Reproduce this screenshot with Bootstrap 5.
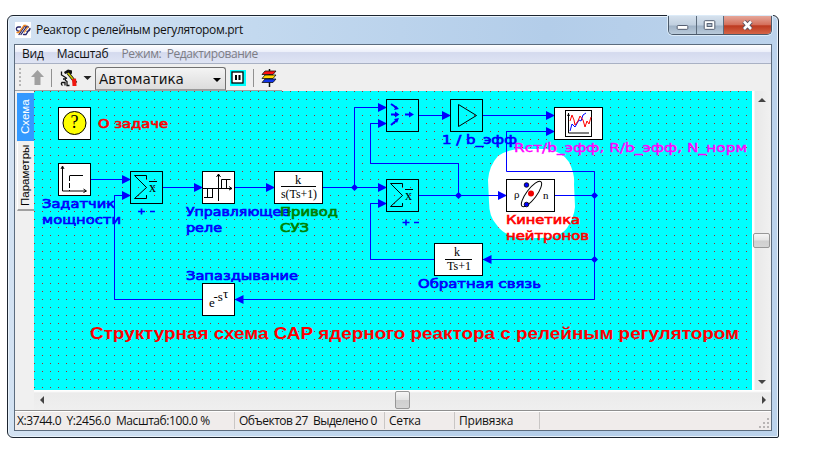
<!DOCTYPE html>
<html lang="ru">
<head>
<meta charset="utf-8">
<title>Реактор с релейным регулятором.prt</title>
<link href="https://cdn.jsdelivr.net/npm/bootstrap@5.3.0/dist/css/bootstrap.min.css" rel="stylesheet">
<style>
body{background:#fff;font:12px/16px "Open Sans","Noto Sans",sans-serif;color:#111;padding:15px 0 0 7px;overflow:hidden}
.win{width:772px;height:423px;border:1px solid #1c2530;border-radius:6px 6px 2px 6px;background:linear-gradient(90deg,#d3e2f2 0,#c3d9ef 32%,#b3cde9 70%,#bcd3ec 100%);box-shadow:inset 0 0 0 1px #e9f3fc;padding:0 6px 6px}
.titlebar{height:28px;padding-left:1px}
.caption{letter-spacing:-.32px;padding:6px 0 0 5px}
.winbtns{height:19px;width:104px;flex:none;border:1px solid #4b5a6b;border-top:0;border-radius:0 0 5px 5px;overflow:hidden;box-shadow:0 0 0 1px #dcebf8}
.wb{background:linear-gradient(#d5e1ed 0,#c0cfdf 48%,#9fb2c6 52%,#bccddd 100%);border-right:1px solid #5c6b7c;width:28px;flex:none}
.wb.mx{width:27px}
.wb.cl{background:linear-gradient(#e5a79a 0,#d5705c 45%,#bd3a20 52%,#d86a4c 100%);border:0;width:47px}
.client{width:758px;height:387px;border:1px solid #5c6c7e;background:#f0f0f0}
.menus{height:19px;border-bottom:1px solid #a9b1c4;background:linear-gradient(#fff 0,#eceffa 38%,#d4daee 42%,#dfe4f4 100%);padding-left:7px}
.menus span{letter-spacing:-.22px;margin-right:13px}
.menus .off{color:#7d7d85;letter-spacing:-.42px}
.toolrow{height:27px;background:#efefef}
.tools{height:27px;border-bottom:1px solid #a0a0a0;width:267px}
.combo{width:131px;height:23px;margin-top:3px;background:linear-gradient(#f4f4f4,#dcdcdc);border:1px solid #707070;border-bottom-color:#999;border-radius:3px 3px 0 0;font:13.5px/23px "DejaVu Sans",sans-serif;padding:0 4px 0 3px;color:#111}
.work{height:339px}
.sidetabs{width:19px;padding:2px 0 0 2px;background:#f0f0f0}
.vtab{writing-mode:vertical-rl;transform:rotate(180deg);font:12px/15px "Liberation Sans",sans-serif;text-align:center;width:17px;background:#f0f0f0;border:1px solid #999;border-left:0;color:#000}
.vtab.on{background:#3399ff;color:#fff;height:48px;font-size:11.5px;border-color:#3399ff #3399ff #3399ff #8ac2ff}
.vtab.two{height:69px;font-size:11.5px;border:0;border-top:2px solid #a0a0a0;border-right:1px solid #fff;margin-top:1px}
.sheet{width:718px;height:299px;display:block}
.vs{width:19px;height:299px;background:linear-gradient(90deg,#fff 0 2px,#e8e8e8 3px,#f1f1f1 100%)}
.hs{height:20px;margin-left:19px;background:linear-gradient(#fff 0 1px,#ebebeb 3px,#efefef 100%)}
.thumb{background:linear-gradient(#f5f5f5 0,#e4e4e4 48%,#cfcfcf 52%,#d5d5d5 100%);border:1px solid #979797;border-radius:2px}
.thumb.v{width:17px;height:15px}.thumb.h{width:15px;height:18px}
.status{height:20px;border-top:1px solid #8f8f8f;background:#f0eceb;box-shadow:inset 0 1px 0 #fff}
.pane{height:17px;border-right:1px solid #c9c6c5;white-space:pre;line-height:17px;padding-left:4px;letter-spacing:-.2px}
.p1{width:220px;padding-left:2px;letter-spacing:-.42px}.p2{width:150px;letter-spacing:-.5px}.p3{width:70px}.p4{width:85px}
text{white-space:pre}
.lbl{font-family:"DejaVu Sans",sans-serif;font-size:12.5px;stroke-width:.65px}
</style>
<script src="https://cdn.jsdelivr.net/npm/bootstrap@5.3.0/dist/js/bootstrap.bundle.min.js"></script>
</head>
<body>
<div class="win">
  <div class="titlebar d-flex">
    <svg class="mt-1" width="16" height="20" viewBox="0 0 16 20"><path d="M0 2h16v16H0z" fill="#fff"/><g fill="none" stroke-width="1.300" stroke-linecap="round"><path d="M5.500 7H3Q1 7.500 1.500 9.500T4 11M4 14.500 10 5.500M13.500 7h-3M6 14.500 12 6M15 8.500q0 2.500-3 3M8.500 14.500h2.500l3.500-5.500" stroke="#27276b"/><path d="M2 12.500h2L9 5.500h2M9.500 12 13 7" stroke="#f08a24"/></g></svg>
    <div class="caption">Реактор с релейным регулятором.prt</div>
    <div class="winbtns d-flex ms-auto">
      <svg class="wb" height="19" viewBox="0 0 28 19"><rect x="8.500" y="9.500" width="11" height="4" rx="1" fill="#fff" stroke="#505a6c"/></svg>
      <svg class="wb mx" height="19" viewBox="0 0 27 19"><rect x="7.500" y="4.500" width="11" height="9" rx="1" fill="#fff" stroke="#505a6c"/><rect x="10.500" y="7.500" width="5" height="3" fill="#b4c3d3" stroke="#505a6c"/></svg>
      <svg class="wb cl" height="19" viewBox="0 0 47 19"><path d="M20 5.500 27 13M27 5.500 20 13" stroke="#575060" stroke-width="4.600"/><path d="M20 5.500 27 13M27 5.500 20 13" stroke="#fff" stroke-width="2.600"/></svg>
    </div>
  </div>
  <div class="client">
    <div class="menus d-flex align-items-center"><span>Вид</span><span>Масштаб</span><span class="off">Режим:&nbsp; Редактирование</span></div>
    <div class="toolrow d-flex"><div class="tools d-flex">
      <svg width="80" height="26" viewBox="15 64 80 26"><path d="M20 68v19" stroke="#b5b5b5" stroke-width="2" stroke-dasharray="2 2"/><path d="M37.500 70 44 77h-3.500v8h-6v-8H31z" fill="#a0a0a0"/><path d="M51.500 69v18" stroke="#909090"/>
      <path d="m64 72 4-2.500 4 1v3l-2 1-2-1.500-3 1z" fill="#111"/><path d="M61.500 71.500v3.500l2.500 1.500 3 2M62.500 85.500q-2-1.500-.5-3h3v3M65 80l2 1.500v4h2.500M63 79h3" stroke="#111" stroke-width="1.300" fill="none"/><path d="m68 73 8 10" stroke="#111" stroke-width="3"/><path d="m68 73 6 7.500" stroke="#c8c800" stroke-width="1.600"/><path d="m72 79 4-.5.500 7.500h-4z" fill="#f01810"/><path d="M83.500 76h8l-4 4z" fill="#222"/></svg>
      <div class="combo d-flex justify-content-between"><span>Автоматика</span><svg width="8" height="20"><path d="M0 10h8l-4 4z"/></svg></div>
      <svg width="54" height="26" viewBox="226 64 54 26"><rect x="230" y="70" width="16" height="16" fill="#00ffff"/><rect x="232" y="72" width="11" height="11" fill="#fff" stroke="#000" stroke-width="1.300"/><path d="M236 75v5M239.500 75v5" stroke="#000" stroke-width="2"/><path d="M253.500 69v18" stroke="#909090"/><path d="M269.500 69v18" stroke="#111" stroke-width="1.500"/><path d="M265 71h11l-3 3.500H262z" fill="#ff1010" stroke="#111" stroke-width=".8"/><path d="M265 75h11l-3 3.500H262z" fill="#ffd800" stroke="#111" stroke-width=".8"/><path d="M265 79h11l-3 3.500H262z" fill="#1034e8" stroke="#111" stroke-width=".8"/></svg>
    </div></div>
    <div class="work">
      <div class="d-flex">
        <div class="sidetabs"><div class="vtab on">Схема</div><div class="vtab two">Параметры</div></div>
        <svg class="sheet" viewBox="34 91 718 299" font-family="Liberation Sans, Arial, sans-serif">
          <defs>
            <pattern id="dots" x="34" y="91" width="8" height="8" patternUnits="userSpaceOnUse"><rect width="8" height="8" fill="#00ffff"/><rect width="1" height="1" fill="#a82828"/></pattern>
          </defs>
          <rect x="34" y="91" width="718" height="299" fill="url(#dots)"/>
          <path d="M488 180Q489 166 498 156Q508 149 522 149H546Q562 151 569 162Q575 174 574 184L575 207Q574 218 567 228Q560 238 540 238H520Q504 236 496 224Q489 216 489 202Z" fill="#fff"/>
          <g fill="none" stroke="#0000ff">
            <path d="M91 179.500h39M130 195.500h-15.500v104H202M163 187.500h39M235 187.500h39M323 187.500h63M354.500 187.500v-80H386M386 123.500h-15.500v40h88v32M419 115.500h31M483 115.500h71M419 195.500h87M386 203.500h-15.500v56H434M555 195.500h39.500M554 131.500h-47.500v40h88v128H235M594.500 259.500H483"/>
          </g>
          <g fill="#0000ff">
            <path id="ar" d="M122 175v9l9-4.500z"/><use href="#ar" y="16"/><use href="#ar" x="72" y="8"/><use href="#ar" x="144" y="8"/><use href="#ar" x="256" y="8"/><use href="#ar" x="256" y="24"/><use href="#ar" x="256" y="-72"/><use href="#ar" x="256" y="-56"/><use href="#ar" x="320" y="-64"/><use href="#ar" x="424" y="-64"/><use href="#ar" x="424" y="-48"/><use href="#ar" x="376" y="16"/>
            <path d="M491.500 255v9l-9-4.500zM243.500 295v9l-9-4.500z"/>
            <path id="nd" d="m354.500 184 3.500 3.500-3.500 3.500-3.500-3.500z"/><use href="#nd" x="104" y="8"/><use href="#nd" x="240" y="8"/><use href="#nd" x="240" y="72"/>
          </g>
          <g stroke="#000" fill="#fff">
            <rect x="58.500" y="107.500" width="32" height="32"/><rect x="58.500" y="163.500" width="32" height="32"/><rect x="202.500" y="171.500" width="32" height="32"/><rect x="274.500" y="171.500" width="48" height="32"/><rect x="554.500" y="107.500" width="48" height="32"/><rect x="506.500" y="179.500" width="48" height="32"/><rect x="434.500" y="243.500" width="48" height="32"/><rect x="202.500" y="283.500" width="32" height="32"/>
            <g fill="none"><rect x="130.500" y="171.500" width="32" height="32"/><rect x="386.500" y="99.500" width="32" height="32"/><rect x="450.500" y="99.500" width="32" height="32"/><rect x="386.500" y="179.500" width="32" height="32"/></g>
          </g>
          <circle cx="74.500" cy="123" r="11.500" fill="#ffff00" stroke="#000"/>
          <text x="70.500" y="128" font-family="Liberation Serif, serif" font-size="18">?</text>
          <g fill="none" stroke="#000">
            <path d="M62.500 167v24H86M61 169l1.500-3 1.500 3M83.500 189l3 2-3 1.500M69.500 175.500H83"/><path d="M69.500 176v15" stroke-dasharray="5 2"/>
            <path id="sg" d="M146.500 179v-3.500h-12l12 12-12 11h12V195"/><use href="#sg" x="256" y="8"/>
            <path d="M149 181.500h8M405 189.500h8"/>
            <path d="M218.500 201v-27M216.500 177l2-3 2 3M203 188.500h29M229 186.500l3 2-3 1.500M221.500 188v-8.500h9M226.500 188v-8M207.500 188v9.500M212.500 188v9.500M204 197.500h9"/>
            <path d="M281 186.500h35M445 259.500h27"/>
            <path d="m458.500 104.500 18 11-18 11z"/>
            <rect x="565.500" y="110.500" width="26" height="26"/><path d="M568.500 113v20H589M567.500 116l1-2 1 2"/>
            <ellipse cx="531.500" cy="194" rx="5" ry="15.500" transform="rotate(37 531.500 194)"/>
          </g>
          <path d="m570 131 2-7 3 3 4-7 2 1 2-6 3-2" fill="none" stroke="#0000ff"/><path d="m570 121 2-6 2 5 1 5 3-4 2-5 3 4 2 7 2-6 2 3 2-7" fill="none" stroke="#ff0000"/>
          <g fill="#0000ff" stroke="#000" stroke-width=".8"><circle cx="526.500" cy="185" r="2.300"/><circle cx="526.500" cy="204.500" r="2.300"/></g><circle cx="531" cy="193.500" r="3" fill="#f00000"/>
          <g stroke="#0000ff" stroke-width="2" fill="none"><path d="m391 104 6 4M391 114.500h6M391 125l6-5M405 114.500h6"/></g>
          <path d="m399 109-5 1 2-4zM395 111.500v6l4.500-3zM399 118l-5 1 3 4zM409 111.500v6l5-3z" fill="#0000ff"/>
          <g font-family="Liberation Serif, Times New Roman, serif" font-size="13">
            <text x="149" y="192" font-size="14">x</text><text x="405" y="200" font-size="14">x</text>
            <text x="295" y="184" font-size="12.500">k</text><text x="281" y="198" textLength="36" lengthAdjust="spacingAndGlyphs">s(Ts+1)</text>
            <text x="454" y="256" font-size="12">k</text><text x="447" y="270" font-size="12" textLength="24" lengthAdjust="spacingAndGlyphs">Ts+1</text>
            <text x="209" y="307" font-size="13">e<tspan x="213.500" y="301">-s</tspan><tspan y="298">τ</tspan></text>
            <text x="514" y="198" font-size="11">ρ</text><text x="543" y="199" font-size="11">n</text>
          </g>
          <g class="lbl" fill="#0000ff" stroke="#0000ff">
            <g fill="#ff0000" stroke="#ff0000"><text x="98" y="128" textLength="70" lengthAdjust="spacingAndGlyphs">О задаче</text><text x="506" y="224" textLength="74" lengthAdjust="spacingAndGlyphs">Кинетика</text><text x="506" y="240" textLength="83" lengthAdjust="spacingAndGlyphs">нейтронов</text></g>
            <text x="42" y="208" textLength="73" lengthAdjust="spacingAndGlyphs">Задатчик</text><text x="42" y="224" textLength="79" lengthAdjust="spacingAndGlyphs">мощности</text>
            <text x="186" y="216" textLength="104" lengthAdjust="spacingAndGlyphs">Управляющее</text><text x="186" y="232" textLength="36" lengthAdjust="spacingAndGlyphs">реле</text>
            <g fill="#008000" stroke="#008000"><text x="280" y="216" textLength="58" lengthAdjust="spacingAndGlyphs">Привод</text><text x="280" y="232" textLength="29" lengthAdjust="spacingAndGlyphs">СУЗ</text></g>
            <text x="186" y="280" textLength="112" lengthAdjust="spacingAndGlyphs">Запаздывание</text>
            <text x="418" y="288" textLength="123" lengthAdjust="spacingAndGlyphs">Обратная связь</text>
            <text x="442" y="144" textLength="75" lengthAdjust="spacingAndGlyphs">1 / b_эфф</text>
            <text x="514" y="152" fill="#ff00ff" stroke="#ff00ff" stroke-width=".4" textLength="233" lengthAdjust="spacingAndGlyphs">Rст/b_эфф, R/b_эфф, N_норм</text>
          </g>
          <path d="M138 211.500h7M141.500 208.500v6M150 211.500h5M402.500 222.500h7M406 219.500v6M414 222.500h5" stroke="#0000ff" stroke-width="1.600"/>
          <text x="90" y="339" font-size="16.500" font-weight="700" fill="#ff0000" textLength="649" lengthAdjust="spacingAndGlyphs">Структурная схема САР ядерного реактора с релейным регулятором</text>
        </svg>
        <div class="vs d-flex flex-column align-items-center">
          <svg width="19" height="142"><path d="m10 7 4 4H6z" fill="#444"/></svg><div class="thumb v"></div><svg class="mt-auto" width="19" height="16"><path d="m10 10 4-4H6z" fill="#444"/></svg>
        </div>
      </div>
      <div class="hs d-flex align-items-center"><svg width="361" height="17"><path d="m6 8 4-4v8z" fill="#444"/></svg><div class="thumb h"></div><svg class="ms-auto" width="16" height="17"><path d="m11 8-4-4v8z" fill="#444"/></svg></div>
      <div class="status d-flex align-items-center"><div class="pane p1">X:3744.0  Y:2456.0  Масштаб:100.0 %</div><div class="pane p2">Объектов 27  Выделено 0</div><div class="pane p3">Сетка</div><div class="pane p4">Привязка</div><svg class="ms-auto" width="12" height="16"><path d="M8 5h2v2H8zM8 9h2v2H8zM4 9h2v2H4zM8 13h2v2H8zM4 13h2v2H4zM0 13h2v2H0z" fill="#b8b4b4"/></svg></div>
    </div>
  </div>
</div>
</body>
</html>
